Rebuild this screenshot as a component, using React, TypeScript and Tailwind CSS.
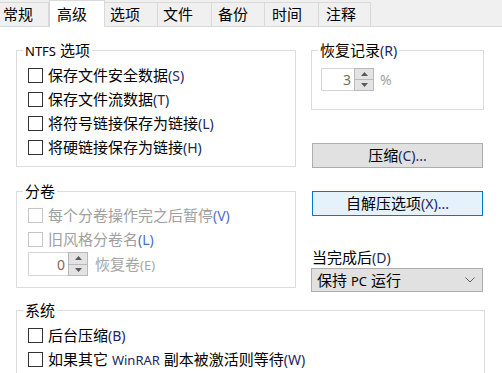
import type { ReactNode } from 'react'

const tabs = [
  { label: '常规', w: 'w-[49px]', pl: 'pl-[3px]' },
  { label: '高级', w: 'w-[56px]', pl: 'pl-[7px]', active: true },
  { label: '选项', w: 'w-[53px]', pl: 'pl-[5px]' },
  { label: '文件', w: 'w-[54px]', pl: 'pl-[5px]' },
  { label: '备份', w: 'w-[53px]', pl: 'pl-[6px]' },
  { label: '时间', w: 'w-[54px]', pl: 'pl-[7px]' },
  { label: '注释', w: 'w-[52px]', pl: 'pl-[7px]' },
]

// latin bits render smaller than the CJK glyphs, like YaHei UI does
function L({ children, className = 'text-[#1c2660]' }: { children: ReactNode; className?: string }) {
  return <span className={`text-[13px] ${className}`}>{children}</span>
}

// mnemonic suffix, e.g. (S)
function M({ children, className = 'text-[#1c2660]' }: { children: ReactNode; className?: string }) {
  return <span className={`text-[14px] ${className}`}>{children}</span>
}

function Group({ title, className, children }: { title: ReactNode; className?: string; children: ReactNode }) {
  return (
    <fieldset className={`border border-[#dcdcdc] ${className ?? ''}`}>
      <legend className="ml-[6px] px-[2px] h-[20px] leading-[20px]">{title}</legend>
      {children}
    </fieldset>
  )
}

function Check({ children, disabled }: { children: ReactNode; disabled?: boolean }) {
  return (
    <div className={`flex items-center h-[24px] gap-[5px] ${disabled ? 'text-[#a0a0a0]' : 'text-black'}`}>
      <span
        className={`w-[15px] h-[15px] border bg-white ${disabled ? 'border-[#c6c6c6]' : 'border-[#333333]'}`}
      />
      <span className="leading-none whitespace-nowrap">{children}</span>
    </div>
  )
}

function Arrow({ up }: { up?: boolean }) {
  return (
    <svg width="7" height="4" viewBox="0 0 7 4">
      <path d={up ? 'M0 4 L3.5 0 L7 4Z' : 'M0 0 L3.5 4 L7 0Z'} fill="#5a5a5a" />
    </svg>
  )
}

function Spinner({ value, w }: { value: string; w: string }) {
  return (
    <div className={`flex h-full ${w} border border-[#d4d4d4] bg-white`}>
      <div className="flex-1 flex items-center justify-end pr-[3px] text-[14px] text-[#7a6a5a] font-['Noto_Sans',sans-serif]">
        {value}
      </div>
      <div className="w-[20px] flex flex-col border border-[#b9b9b9] bg-[#e3e3e3] -my-px -mr-px">
        <div className="flex-1 flex items-center justify-center border-b border-[#b9b9b9]">
          <Arrow up />
        </div>
        <div className="flex-1 flex items-center justify-center">
          <Arrow />
        </div>
      </div>
    </div>
  )
}

export default function App() {
  return (
    <div className="w-[502px] h-[373px] overflow-hidden bg-[#f0f0f0] text-[15px] text-black font-['Noto_Sans','Noto_Sans_CJK_SC',sans-serif]">
      {/* tab strip */}
      <div className="flex items-end h-[27px]">
        {tabs.map((t) =>
          t.active ? (
            <div
              key={t.label}
              className={`${t.w} ${t.pl} h-[27px] flex items-center bg-white border-t border-l border-r border-[#d9d9d9]`}
            >
              {t.label}
            </div>
          ) : (
            <div
              key={t.label}
              className={`${t.w} ${t.pl} h-[25px] flex items-center bg-[#f0f0f0] border-t border-r border-b border-[#d9d9d9]`}
            >
              {t.label}
            </div>
          )
        )}
        <div className="flex-1 h-[1px] bg-[#d9d9d9]" />
      </div>

      {/* page */}
      <div className="bg-white h-[346px] pl-[16px]">
        <div className="flex gap-[15px] h-[261px]">
          <div className="w-[280px] shrink-0">
            <Group
              className="mt-[13px]"
              title={
                <>
                  <L className="text-black">NTFS</L> 选项
                </>
              }
            >
              <div className="pl-[11px] pt-[3px] pb-[7px]">
                <Check>
                  保存文件安全数据<M>(S)</M>
                </Check>
                <Check>
                  保存文件流数据<M>(T)</M>
                </Check>
                <Check>
                  将符号链接保存为链接<M>(L)</M>
                </Check>
                <Check>
                  将硬链接保存为链接<M>(H)</M>
                </Check>
              </div>
            </Group>

            <Group className="mt-[14px]" title="分卷">
              <div className="pl-[11px] pt-[2px] pb-[10px]">
                <Check disabled>
                  每个分卷操作完之后暂停<M className="text-[#4f6cc4]">(V)</M>
                </Check>
                <Check disabled>
                  旧风格分卷名<M className="text-[#4f6cc4]">(L)</M>
                </Check>
                <div className="flex items-center h-[26px] gap-[7px] text-[#a6a6a6]">
                  <div className="h-[24px]">
                    <Spinner value="0" w="w-[60px]" />
                  </div>
                  <span className="leading-none">
                    恢复卷<L className="text-[#a6a6a6]">(E)</L>
                  </span>
                </div>
              </div>
            </Group>
          </div>

          <div className="w-[173px] shrink-0">
            <Group
              className="mt-[13px]"
              title={
                <>
                  恢复记录<M>(R)</M>
                </>
              }
            >
              <div className="pl-[9px] pt-[8px] pb-[18px] flex items-center gap-[6px]">
                <div className="h-[23px]">
                  <Spinner value="3" w="w-[53px]" />
                </div>
                <M className="text-[#a0a0a0]">%</M>
              </div>
            </Group>

            <button className="mt-[33px] ml-[1px] w-[171px] h-[25px] flex items-center justify-center bg-[#e1e1e1] border border-[#adadad]">
              压缩<M>(C)...</M>
            </button>
            <button className="mt-[23px] ml-[1px] w-[171px] h-[25px] flex items-center justify-center bg-[#e5f1fb] border border-[#0078d7]">
              自解压选项<M>(X)...</M>
            </button>

            <div className="mt-[31px] ml-[1px] h-[20px] flex items-center">
              当完成后<M>(D)</M>
            </div>
            <div className="mt-[1px] w-[172px] h-[24px] flex items-center justify-between pl-[5px] pr-[7px] bg-[#e1e1e1] border border-[#adadad]">
              <span>
                保持 <L className="text-black">PC</L> 运行
              </span>
              <svg width="10" height="6" viewBox="0 0 10 6">
                <polyline points="0.5,0.5 5,5 9.5,0.5" fill="none" stroke="#606060" strokeWidth="1" />
              </svg>
            </div>
          </div>
        </div>

        <Group className="mt-[12px] w-[469px]" title="系统">
          <div className="pl-[11px] pt-[3px] pb-[8px]">
            <Check>
              后台压缩<M>(B)</M>
            </Check>
            <Check>
              如果其它 <L>WinRAR</L> 副本被激活则等待<M>(W)</M>
            </Check>
          </div>
        </Group>
      </div>
    </div>
  )
}
